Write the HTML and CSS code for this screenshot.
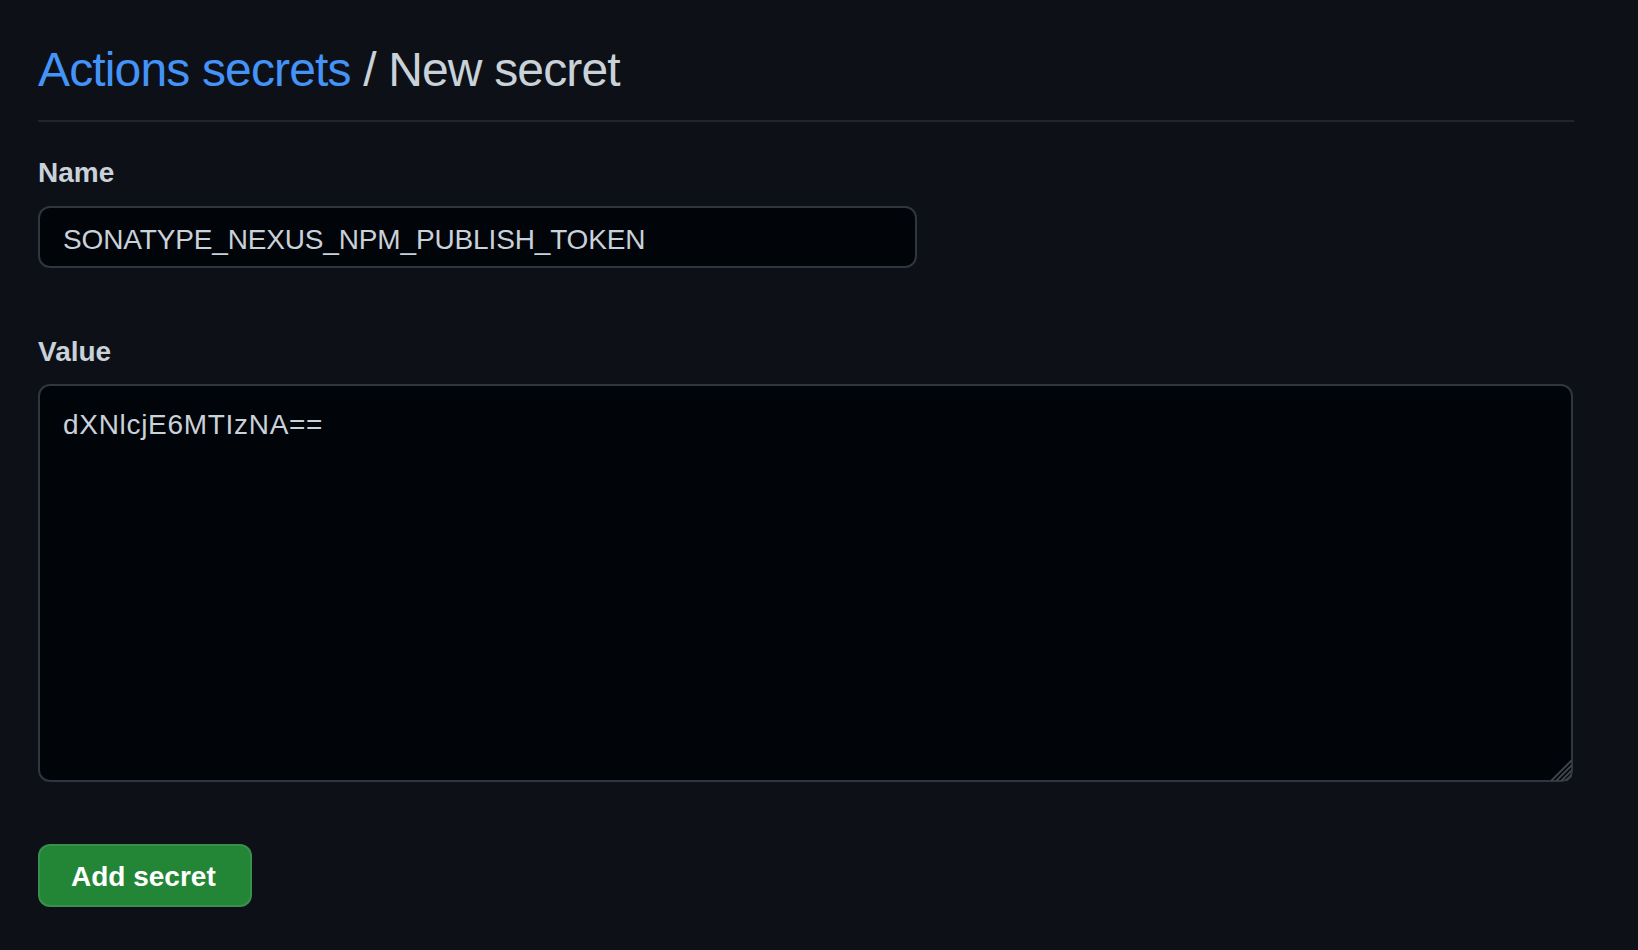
FILE: index.html
```html
<!DOCTYPE html>
<html lang="en">
<head>
    <meta charset="UTF-8">
    <meta name="viewport" content="width=device-width, initial-scale=1.0">
    <title>New secret</title>
    <link rel="stylesheet" href="styles.css">
</head>
<body>
    <div class="container">
        <div class="subhead">
            <h1><a href="#">Actions secrets</a> / New secret</h1>
        </div>
        <form id="secretForm">
            <label for="secretName" class="label-name">Name</label>
            <input type="text" id="secretName" name="name" class="name-input" value="SONATYPE_NEXUS_NPM_PUBLISH_TOKEN">
            <label for="secretValue" class="label-value">Value</label>
            <div class="textarea-wrap">
                <textarea id="secretValue" name="value">dXNlcjE6MTIzNA==</textarea>
                <!-- resize grip -->
                <svg class="grip" width="24" height="24" viewBox="0 0 24 24">
                    <path d="M3 24 L24 3 M8 24 L24 8 M13 24 L24 13 M18 24 L24 18" stroke="#3d434b" stroke-width="2" fill="none"/>
                </svg>
            </div>
            <button type="button">Add secret</button>
        </form>
    </div>
</body>
</html>
```

FILE: styles.css
```css
body {
    margin: 0;
    background-color: #0d1117;
    color: #c9d1d9;
    font-family: "Liberation Sans", Arial, sans-serif;
}
.container {
    width: 1536px;
    padding-left: 38px;
}
.subhead {
    padding-top: 34px;
    padding-bottom: 14px;
    border-bottom: 2px solid #21262d;
}
h1 {
    margin: 0;
    font-size: 48px;
    font-weight: normal;
    line-height: 72px;
    letter-spacing: -0.85px;
    color: #c9d1d9;
}
h1 a {
    color: #4493f8;
    text-decoration: none;
}
label {
    display: block;
    font-size: 28px;
    font-weight: bold;
    line-height: 40px;
    margin-bottom: 13px;
}
.label-name {
    margin-top: 31px;
}
.label-value {
    margin-top: 64px;
    margin-bottom: 12px;
}
input, textarea {
    display: block;
    box-sizing: border-box;
    background-color: #010409;
    color: #c9d1d9;
    border: 2px solid #30363d;
    border-radius: 12px;
    font-family: "Liberation Sans", Arial, sans-serif;
    font-size: 28px;
    outline: none;
}
.name-input {
    width: 879px;
    height: 62px;
    padding: 5px 22px 0 23px;
    letter-spacing: -0.15px;
}
.textarea-wrap {
    position: relative;
    width: 1535px;
}
textarea {
    width: 1535px;
    height: 398px;
    padding: 19px 22px 18px 23px;
    line-height: 40px;
    letter-spacing: 0.7px;
    resize: none;
}
.grip {
    position: absolute;
    right: 1px;
    bottom: 1px;
}
button {
    margin-top: 62px;
    height: 63px;
    padding: 3px 34px 0 31px;
    background-color: #238636;
    color: white;
    border: 2px solid rgba(240, 246, 252, 0.1);
    border-radius: 12px;
    font-family: "Liberation Sans", Arial, sans-serif;
    font-size: 28px;
    font-weight: bold;
    cursor: pointer;
}
button:hover {
    background-color: #2ea043;
}
```
